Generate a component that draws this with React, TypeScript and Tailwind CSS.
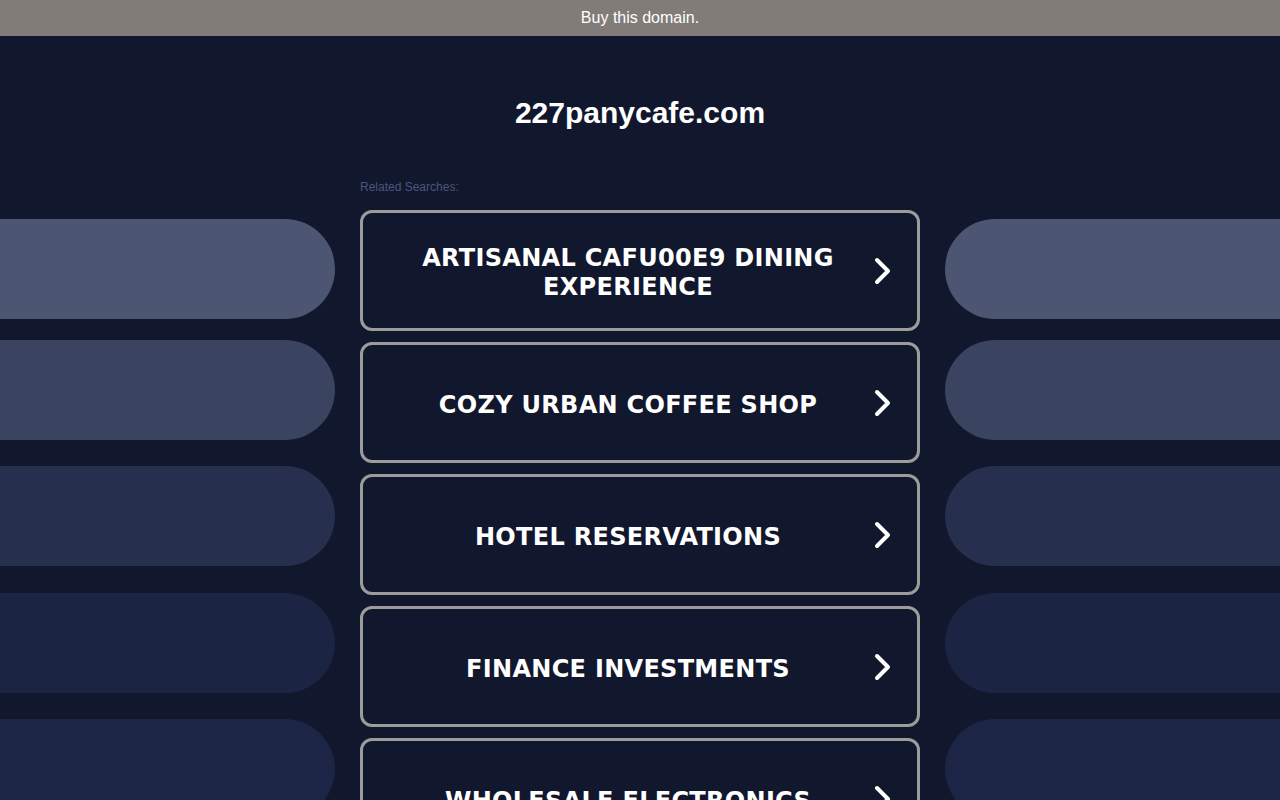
import React from "react";

const items = [
  "ARTISANAL CAFU00E9 DINING EXPERIENCE",
  "COZY URBAN COFFEE SHOP",
  "HOTEL RESERVATIONS",
  "FINANCE INVESTMENTS",
  "WHOLESALE ELECTRONICS",
];

const pills = ["bg-[#4c5673]", "bg-[#3a4360]", "bg-[#262f4d]", "bg-[#1c2444]", "bg-[#1c2546]"];
const gaps = ["mt-0", "mt-[21px]", "mt-[26px]", "mt-[27px]", "mt-[26px]"];

function Chevron() {
  return (
    <svg width="20" height="28" viewBox="0 0 20 28" fill="none">
      <path d="M4 3 L15 14 L4 25" stroke="white" strokeWidth="4" strokeLinecap="round" strokeLinejoin="round" />
    </svg>
  );
}

export default function App() {
  return (
    <div className="h-[800px] overflow-hidden bg-[#11172c] font-['Liberation_Sans',Arial,sans-serif]">
      <div className="h-9 bg-[#817c78] flex items-center justify-center text-white text-base">
        Buy this domain.
      </div>
      <div className="h-[144px] flex items-center justify-center pt-[9px]">
        <h1 className="text-white font-bold text-[30px]">227panycafe.com</h1>
      </div>
      <div className="flex gap-[25px]">
        <div className="flex-1 flex flex-col pt-[39px]">
          {pills.map((c, i) => (
            <div key={i} className={`h-[100px] rounded-r-full ${c} ${gaps[i]}`} />
          ))}
        </div>
        <div className="w-[560px] flex flex-col">
          <div className="text-[12px] text-[#4b5680] h-[12px] leading-[12px] mt-[1px] mb-[17px]">Related Searches:</div>
          <div className="flex flex-col gap-[11px]">
            {items.map((t) => (
              <div
                key={t}
                className="h-[121px] border-[3px] border-[#9c9c9c] rounded-[12px] flex items-center pl-5 pr-6"
              >
                <div className="flex-1 text-center text-white font-bold text-[24px] leading-[29px] tracking-[0.3px] font-['DejaVu_Sans',Verdana,sans-serif] px-8 pt-[5px]">
                  {t}
                </div>
                <div className="w-5 flex justify-center">
                  <Chevron />
                </div>
              </div>
            ))}
          </div>
        </div>
        <div className="flex-1 flex flex-col pt-[39px]">
          {pills.map((c, i) => (
            <div key={i} className={`h-[100px] rounded-l-full ${c} ${gaps[i]}`} />
          ))}
        </div>
      </div>
    </div>
  );
}
